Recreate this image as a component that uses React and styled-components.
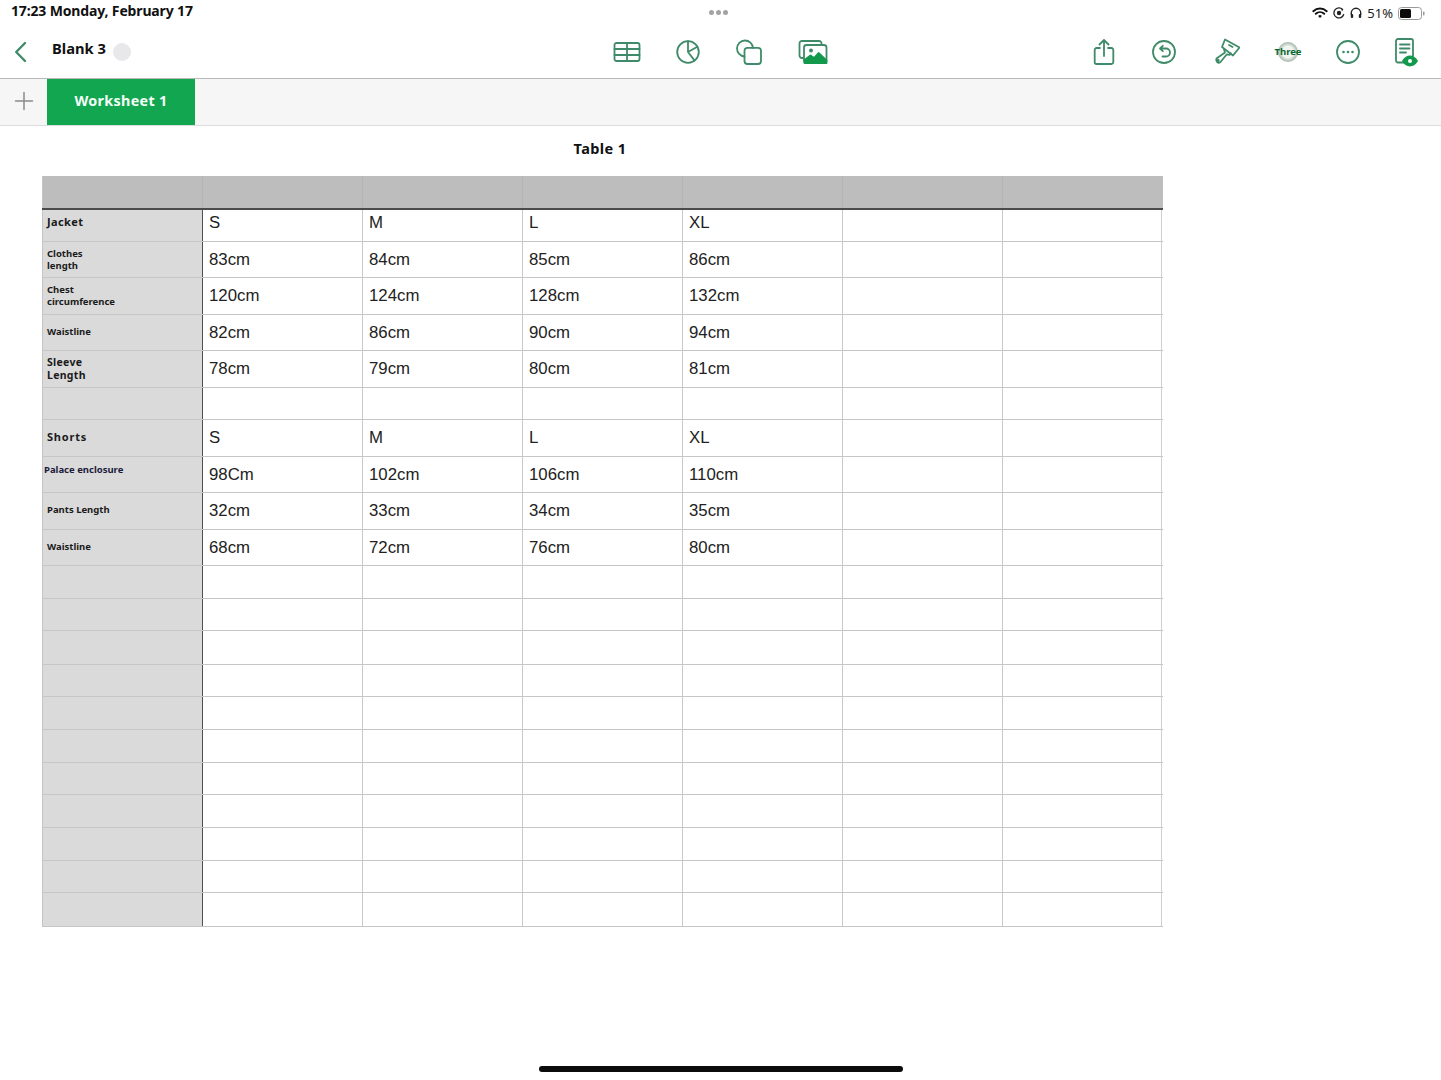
import React from "react";
import styled, { createGlobalStyle } from "styled-components";

const GlobalStyle = createGlobalStyle`
  html, body {
    margin: 0;
    background: #fff;
  }
  body {
    font-family: "Noto Sans", "Open Sans", sans-serif;
    color: #111;
  }
`;

const GREEN = "#3f8b69";

const Page = styled.div`
  width: 1441px;
  height: 1080px;
  overflow: hidden;
  background: #fff;
`;

const StatusBar = styled.div`
  height: 26px;
  display: grid;
  grid-template-columns: 1fr auto 1fr;
  align-items: center;
  padding: 0 16px 6px 11px;
  box-sizing: border-box;
`;

const Clock = styled.div`
  font-size: 14px;
  font-weight: 700;
  letter-spacing: -0.15px;
  white-space: nowrap;
  margin-top: -2px;
`;

const Dots = styled.div`
  display: flex;
  gap: 2px;
  margin-top: 3px;
  span {
    width: 5px;
    height: 5px;
    border-radius: 50%;
    background: #a3a3a3;
  }
`;

const StatusIcons = styled.div`
  display: flex;
  justify-content: flex-end;
  align-items: center;
  gap: 5px;
  margin-top: 4px;
  font-size: 13px;
  color: #222;
`;

const Toolbar = styled.div`
  height: 52px;
  display: flex;
  align-items: center;
  border-bottom: 1px solid #b9b9b9;
  padding-right: 7px;
`;

const TitleArea = styled.div`
  width: 597px;
  display: flex;
  align-items: center;
  padding-left: 14px;
  box-sizing: border-box;
`;

const DocName = styled.div`
  margin-left: 25px;
  font-size: 14.7px;
  font-weight: 700;
  margin-top: -9px;
`;

const SavingDot = styled.div`
  width: 18px;
  height: 18px;
  margin-left: 7px;
  border-radius: 50%;
  background: #e8e8ea;
`;

const ToolGroup = styled.div`
  display: flex;
  align-items: center;
  margin-left: ${(p) => (p.$right ? "auto" : "0")};
`;

const ToolSlot = styled.div`
  width: ${(p) => p.$w}px;
  height: 36px;
  display: flex;
  align-items: center;
  justify-content: center;
`;

const ThreeBadge = styled.div`
  width: 20px;
  height: 20px;
  margin-top: -1px;
  border-radius: 50%;
  background: radial-gradient(circle, #f2f5f2 40%, #8fa596 78%, #dfe5e0 100%);
  display: flex;
  align-items: center;
  justify-content: center;
  font-size: 9.5px;
  font-weight: 700;
  color: #07682f;
  white-space: nowrap;
`;

const TabBar = styled.div`
  height: 46px;
  display: flex;
  background: #f6f6f6;
  border-bottom: 1px solid #dcdcdc;
`;

const AddSlot = styled.div`
  width: 47px;
  padding-bottom: 2px;
  display: flex;
  align-items: center;
  justify-content: center;
`;

const Tab = styled.div`
  width: 148px;
  padding-bottom: 4px;
  box-sizing: border-box;
  background: #12a650;
  color: #f4fff8;
  display: flex;
  align-items: center;
  justify-content: center;
  font-size: 14.3px;
  font-weight: 700;
  letter-spacing: 0.35px;
`;

const TableTitle = styled.div`
  width: 1120px;
  margin-left: 40px;
  height: 50px;
  padding-top: 12px;
  box-sizing: border-box;
  text-align: center;
  font-size: 14.5px;
  font-weight: 700;
  letter-spacing: 0.4px;
  line-height: 20px;
`;

const Sheet = styled.div`
  margin-left: 42px;
  width: 1121px;
`;

const Row = styled.div`
  display: grid;
  grid-template-columns: repeat(7, 160px);
  height: ${(p) => p.$h}px;
  box-sizing: border-box;
  border-bottom: ${(p) => (p.$head ? "2px solid #4b4b4b" : "1px solid #c6c6c6")};
  background: ${(p) => (p.$head ? "#bcbdbc" : "#fff")};
`;

const Label = styled.div`
  background: ${(p) => (p.$head ? "#bcbdbc" : "#dadada")};
  border-left: 1px solid #c4c4c4;
  display: flex;
  align-items: center;
  box-sizing: border-box;
  padding-left: ${(p) => p.$x}px;
  padding-bottom: ${(p) => p.$lift || 0}px;
  font-size: ${(p) => p.$size || 9.5}px;
  font-weight: 700;
  line-height: ${(p) => (p.$size > 10 ? 13 : 12)}px;
  letter-spacing: ${(p) => p.$track || 0}px;
  color: ${(p) => (p.$navy ? "#1c1c3c" : "#1a1a1a")};
`;

const Cell = styled.div`
  border-left: 1px solid ${(p) => (p.$first ? "#4f4f4f" : p.$head ? "#b3b4b3" : "#c9c9c9")};
  ${(p) => p.$last && !p.$head && "border-right: 1px solid #cfcfcf;"}
  display: flex;
  align-items: center;
  box-sizing: border-box;
  padding-left: 6px;
  padding-bottom: ${(p) => p.$lift || 0}px;
  font-family: "Liberation Sans", Arial, sans-serif;
  font-size: 16.8px;
  color: #222;
`;

const HomeBar = styled.div`
  width: 364px;
  height: 6px;
  margin: 139px auto 0;
  background: #0c0c0c;
  border-radius: 3px;
`;

const Icon = ({ w = 28, h = 28, children }) => (
  <svg width={w} height={h} viewBox={`0 0 ${w} ${h}`} fill="none" stroke={GREEN} strokeWidth="1.8" strokeLinecap="round" strokeLinejoin="round">
    {children}
  </svg>
);

const BackIcon = () => (
  <svg width="13" height="22" viewBox="0 0 13 22" fill="none" stroke={GREEN} strokeWidth="2.4" strokeLinecap="round" strokeLinejoin="round">
    <path d="M11 2 2.2 11 11 20" />
  </svg>
);

const TableIcon = () => (
  <Icon>
    <rect x="1.5" y="5" width="25" height="18" rx="2" />
    <path d="M1.5 11h25M1.5 17h25M14 5v18" />
  </Icon>
);

const PieIcon = () => (
  <Icon>
    <circle cx="14" cy="14" r="10.8" />
    <path d="M14 3.2V14l9.4-5.3M14 14l6.6 8.6" />
  </Icon>
);

const ShapesIcon = () => (
  <Icon>
    <path d="M9.5 18.5a8 8 0 1 1 8.5-8.5" />
    <rect x="9.5" y="9.8" width="16.5" height="16.2" rx="3" />
  </Icon>
);

const MediaIcon = () => (
  <Icon w={30} h={28}>
    <path d="M5 20H4a2.500 2.500 0 0 1-2.500-2.500V5.500A2.500 2.500 0 0 1 4 3h17a2.500 2.500 0 0 1 2.500 2.500V7" />
    <rect x="6" y="7" width="22.500" height="18" rx="2.500" />
    <circle cx="13" cy="12.500" r="2" fill={GREEN} stroke="none" />
    <path d="M6.500 25v-3l6-4.500 3.500 2.500 4.500-5 8 7.500V25z" fill="#12994c" stroke="#12994c" />
  </Icon>
);

const ShareIcon = () => (
  <Icon w={22} h={28}>
    <path d="M7 10H3.500A1.800 1.800 0 0 0 1.700 11.800v12.400A1.800 1.800 0 0 0 3.500 26h15a1.800 1.800 0 0 0 1.800-1.800V11.800A1.800 1.800 0 0 0 18.500 10H15" />
    <path d="M11 18V2M6.500 6.500 11 2l4.500 4.500" />
  </Icon>
);

const UndoIcon = () => (
  <Icon>
    <circle cx="14" cy="14" r="11" />
    <path d="M10.500 10.500h5.500a4 4 0 0 1 0 8h-3.500M12.800 7.800l-2.800 2.700 2.800 2.700" />
  </Icon>
);

const BrushIcon = () => (
  <Icon>
    <path d="M13 1.500 27.500 9.500 21 17.500 10 9z" />
    <path d="M17 7l3.500 2M12 11.500l1 3-8.500 6a2.800 2.800 0 0 0 3.800 3.800l6.500-8 3 .5 1-1.500" />
    <circle cx="6" cy="22.500" r="0.800" />
  </Icon>
);

const MoreIcon = () => (
  <Icon>
    <circle cx="14" cy="14" r="11" />
    <circle cx="9.500" cy="14" r="1.300" fill={GREEN} stroke="none" />
    <circle cx="14" cy="14" r="1.300" fill={GREEN} stroke="none" />
    <circle cx="18.500" cy="14" r="1.300" fill={GREEN} stroke="none" />
  </Icon>
);

const ReaderIcon = () => (
  <Icon w={24} h={30}>
    <path d="M10 25.500H4A2 2 0 0 1 2 23.500V4a2 2 0 0 1 2-2h13a2 2 0 0 1 2 2v15" />
    <path d="M6 7.500h9.500M6 11.500h9.500M6 15.500h6" />
    <path d="M9 24c2-3 4.200-4.500 7-4.500s5 1.500 7 4.500c-2 3-4.200 4.500-7 4.500S11 27 9 24z" fill="#12994c" stroke="#12994c" />
    <circle cx="16" cy="24" r="2" fill="#fff" stroke="none" />
  </Icon>
);

const PlusIcon = () => (
  <svg width="20" height="20" viewBox="0 0 20 20" stroke="#8b8b8b" strokeWidth="1.500" strokeLinecap="round">
    <path d="M10 1.500v17M1.500 10h17" />
  </svg>
);

const WifiIcon = () => (
  <svg width="16" height="12" viewBox="0 0 16 12" fill="none" stroke="#111" strokeWidth="1.900" strokeLinecap="round">
    <path d="M1.300 4.200a9.800 9.800 0 0 1 13.400 0M3.800 6.800a6.200 6.200 0 0 1 8.400 0" />
    <path d="M8 11 6.100 9a2.800 2.800 0 0 1 3.800 0z" fill="#111" stroke="none" />
  </svg>
);

const LockIcon = () => (
  <svg width="12" height="12" viewBox="0 0 12 12" fill="none" stroke="#222" strokeWidth="1.300">
    <path d="M10.700 7.500A5 5 0 1 1 9.500 2.400" strokeLinecap="round" />
    <circle cx="6" cy="6" r="2.200" fill="#222" stroke="none" />
    <path d="M8 1l2.300 1.300L9 4.400z" fill="#222" stroke="none" />
  </svg>
);

const HeadphonesIcon = () => (
  <svg width="12" height="12" viewBox="0 0 12 12" fill="none" stroke="#222" strokeWidth="1.400">
    <path d="M1.300 8V6a4.700 4.700 0 0 1 9.400 0v2" />
    <rect x="0.800" y="7" width="2.400" height="4" rx="1" fill="#222" stroke="none" />
    <rect x="8.800" y="7" width="2.400" height="4" rx="1" fill="#222" stroke="none" />
  </svg>
);

const BatteryIcon = () => (
  <svg width="27" height="13" viewBox="0 0 27 13">
    <rect x="0.500" y="0.500" width="23" height="12" rx="3" fill="none" stroke="#9a9a9a" />
    <rect x="2" y="2" width="11" height="9" rx="1.500" fill="#0c0c0c" />
    <rect x="25" y="4.500" width="1.500" height="4" rx="0.700" fill="#9a9a9a" />
  </svg>
);

const COLUMNS = 6;

const rows = [
  { h: 32, label: "Jacket", x: 4, lift: 8, cellLift: 6, size: 11, track: 0.4, values: ["S", "M", "L", "XL"] },
  { h: 36, label: ["Clothes", "length"], x: 4, values: ["83cm", "84cm", "85cm", "86cm"] },
  { h: 37, label: ["Chest", "circumference"], x: 4, values: ["120cm", "124cm", "128cm", "132cm"] },
  { h: 36, label: "Waistline", x: 4, lift: 2, values: ["82cm", "86cm", "90cm", "94cm"] },
  { h: 37, label: ["Sleeve", "Length"], x: 4, size: 10.5, track: 0.3, values: ["78cm", "79cm", "80cm", "81cm"] },
  { h: 32, values: [] },
  { h: 37, label: "Shorts", x: 4, lift: 3, size: 11, track: 0.8, values: ["S", "M", "L", "XL"] },
  { h: 36, label: "Palace enclosure", x: 1, lift: 9, navy: true, values: ["98Cm", "102cm", "106cm", "110cm"] },
  { h: 37, label: "Pants Length", x: 4, lift: 2, values: ["32cm", "33cm", "34cm", "35cm"] },
  { h: 36, label: "Waistline", x: 4, lift: 2, values: ["68cm", "72cm", "76cm", "80cm"] },
  ...[33, 32, 34, 32, 33, 33, 32, 33, 33, 32, 34].map((h) => ({ h, values: [] })),
];

function TableRow({ row }) {
  const lines = Array.isArray(row.label) ? row.label : [row.label];
  return (
    <Row $h={row.h}>
      <Label $x={row.x} $lift={row.lift} $navy={row.navy} $size={row.size} $track={row.track}>
        <div>
          {lines.map((line) => (
            <div key={line}>{line}</div>
          ))}
        </div>
      </Label>
      {Array.from({ length: COLUMNS }).map((_, i) => (
        <Cell key={i} $first={i === 0} $last={i === COLUMNS - 1} $lift={row.cellLift}>
          {row.values[i]}
        </Cell>
      ))}
    </Row>
  );
}

export default function App() {
  return (
    <Page>
      <GlobalStyle />
      <StatusBar>
        <Clock>17:23 Monday, February 17</Clock>
        <Dots>
          <span />
          <span />
          <span />
        </Dots>
        <StatusIcons>
          <WifiIcon />
          <LockIcon />
          <HeadphonesIcon />
          <span>51%</span>
          <BatteryIcon />
        </StatusIcons>
      </StatusBar>
      <Toolbar>
        <TitleArea>
          <BackIcon />
          <DocName>Blank 3</DocName>
          <SavingDot />
        </TitleArea>
        <ToolGroup>
          <ToolSlot $w={60}><TableIcon /></ToolSlot>
          <ToolSlot $w={61}><PieIcon /></ToolSlot>
          <ToolSlot $w={61}><ShapesIcon /></ToolSlot>
          <ToolSlot $w={67}><MediaIcon /></ToolSlot>
        </ToolGroup>
        <ToolGroup $right>
          <ToolSlot $w={60}><ShareIcon /></ToolSlot>
          <ToolSlot $w={60}><UndoIcon /></ToolSlot>
          <ToolSlot $w={64}><BrushIcon /></ToolSlot>
          <ToolSlot $w={60}><ThreeBadge>Three</ThreeBadge></ToolSlot>
          <ToolSlot $w={60}><MoreIcon /></ToolSlot>
          <ToolSlot $w={56}><ReaderIcon /></ToolSlot>
        </ToolGroup>
      </Toolbar>
      <TabBar>
        <AddSlot><PlusIcon /></AddSlot>
        <Tab>Worksheet 1</Tab>
      </TabBar>
      <TableTitle>Table 1</TableTitle>
      <Sheet>
        <Row $h={34} $head>
          <Label $head $x={4} />
          {Array.from({ length: COLUMNS }).map((_, i) => (
            <Cell key={i} $head />
          ))}
        </Row>
        {rows.map((row, i) => (
          <TableRow key={i} row={row} />
        ))}
      </Sheet>
      <HomeBar />
    </Page>
  );
}
